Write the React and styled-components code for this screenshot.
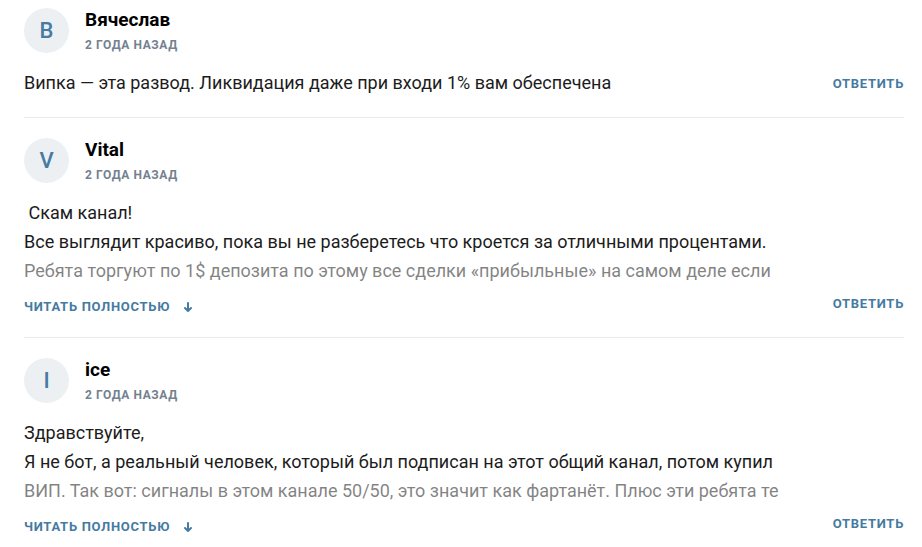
import styled, { createGlobalStyle } from 'styled-components';

const GlobalStyle = createGlobalStyle`
  body {
    margin: 0;
    background: #ffffff;
    font-family: Roboto, 'Liberation Sans', Arial, sans-serif;
  }
`;

const comments = [
  {
    id: 1,
    author: 'Вячеслав',
    date: '2 года назад',
    text: 'Випка — эта развод. Ликвидация даже при входи 1% вам обеспечена',
    long: false,
  },
  {
    id: 2,
    author: 'Vital',
    date: '2 года назад',
    text:
      ' Скам канал!\nВсе выглядит красиво, пока вы не разберетесь что кроется за отличными процентами.\nРебята торгуют по 1$ депозита по этому все сделки «прибыльные» на самом деле если',
    long: true,
  },
  {
    id: 3,
    author: 'ice',
    date: '2 года назад',
    text:
      'Здравствуйте,\nЯ не бот, а реальный человек, который был подписан на этот общий канал, потом купил\nВИП. Так вот: сигналы в этом канале 50/50, это значит как фартанёт. Плюс эти ребята те',
    long: true,
  },
];

function Comment({ comment }) {
  return (
    <Item>
      <Header>
        <Avatar>{comment.author[0].toUpperCase()}</Avatar>
        <Meta>
          <Name>{comment.author}</Name>
          <Date>{comment.date}</Date>
        </Meta>
      </Header>
      <Body>
        <Content>
          <Text $clamped={comment.long}>{comment.text}</Text>
          {comment.long && (
            <ReadMore>
              Читать полностью
              <svg width="12" height="12" viewBox="0 0 12 12" fill="none">
                <path d="M6 2v8M3 7l3 3 3-3" stroke="currentColor" strokeWidth="2" strokeLinecap="round" strokeLinejoin="round" />
              </svg>
            </ReadMore>
          )}
        </Content>
        <Reply>Ответить</Reply>
      </Body>
    </Item>
  );
}

export default function App() {
  return (
    <>
      <GlobalStyle />
      <List>
        {comments.map((c) => (
          <Comment key={c.id} comment={c} />
        ))}
      </List>
    </>
  );
}

const List = styled.div`
  display: flex;
  flex-direction: column;
  padding: 0 18px 0 24px;
  width: 922px;
  box-sizing: border-box;
`;

const Item = styled.div`
  display: flex;
  flex-direction: column;
  padding: 20px 0 20px;
  border-bottom: 1px solid #ebebeb;

  &:first-child {
    padding-top: 8px;
  }
`;

const Header = styled.div`
  display: flex;
  align-items: flex-start;
  gap: 16px;
`;

const Avatar = styled.div`
  width: 45px;
  height: 45px;
  border-radius: 50%;
  background: #edf0f3;
  color: #467ba3;
  font-size: 22px;
  font-weight: 500;
  display: flex;
  align-items: center;
  justify-content: center;
  flex-shrink: 0;
`;

const Meta = styled.div`
  display: flex;
  flex-direction: column;
`;

const Name = styled.span`
  font-size: 19px;
  font-weight: 700;
  color: #000;
  line-height: 23px;
`;

const Date = styled.span`
  margin-top: 6px;
  font-size: 12px;
  font-weight: 700;
  color: #738190;
  text-transform: uppercase;
  letter-spacing: 0.6px;
  line-height: 16px;
`;

const Body = styled.div`
  display: flex;
  justify-content: space-between;
  align-items: flex-end;
  margin-top: 15px;
`;

const Content = styled.div`
  display: flex;
  flex-direction: column;
  gap: 12px;
`;

const Text = styled.div`
  position: relative;
  font-size: 18px;
  line-height: 29px;
  color: #1c1c1c;
  white-space: pre-wrap;
  ${(p) =>
    p.$clamped &&
    `
    max-height: 87px;
    overflow: hidden;
    &::after {
      content: '';
      position: absolute;
      left: 0;
      right: 0;
      bottom: 0;
      height: 29px;
      background: rgba(255, 255, 255, 0.45);
    }
  `}
`;

const ReadMore = styled.button`
  display: flex;
  align-items: center;
  gap: 12px;
  padding: 0;
  border: none;
  background: none;
  font-family: inherit;
  font-size: 13px;
  font-weight: 700;
  color: #457aa1;
  text-transform: uppercase;
  letter-spacing: 0.7px;
  line-height: 20px;
  cursor: pointer;
`;

const Reply = styled.button`
  padding: 0;
  margin-bottom: 5px;
  border: none;
  background: none;
  font-family: inherit;
  font-size: 13px;
  font-weight: 700;
  color: #457aa1;
  text-transform: uppercase;
  letter-spacing: 0.7px;
  line-height: 16px;
  cursor: pointer;
`;
